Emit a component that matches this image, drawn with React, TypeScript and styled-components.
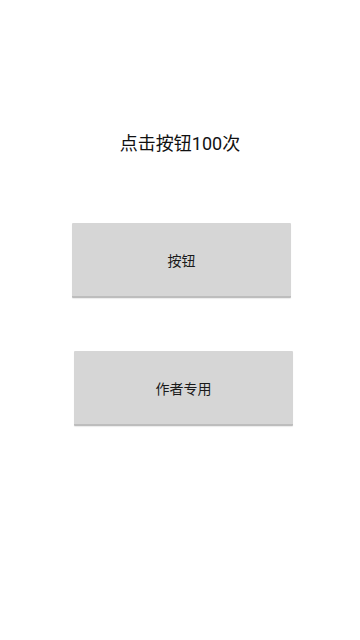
import React from 'react';
import styled, { createGlobalStyle } from 'styled-components';

const GlobalStyle = createGlobalStyle`
  html, body {
    margin: 0;
    padding: 0;
    background: #ffffff;
  }
  body {
    font-family: Roboto, "Noto Sans CJK SC", sans-serif;
  }
`;

const Screen = styled.div`
  width: 360px;
  min-height: 640px;
  display: flex;
  flex-direction: column;
  background: #ffffff;
`;

const Title = styled.h1`
  margin: 132px 0 0;
  font-size: 18px;
  line-height: 24px;
  font-weight: 400;
  color: #111111;
  text-align: center;
`;

const Actions = styled.div`
  display: flex;
  flex-direction: column;
  gap: 53px;
  margin-top: 67px;
`;

const ActionButton = styled.button<{ $left: number }>`
  box-sizing: border-box;
  width: 219px;
  height: 75px;
  margin-left: ${(p) => p.$left}px;
  padding: 0;
  border: none;
  border-bottom: 2px solid #bdbdbd;
  border-radius: 1px;
  background: #d6d6d6;
  box-shadow: 0 1px 1px rgba(0, 0, 0, 0.08);
  font-family: Roboto, "Noto Sans CJK SC", sans-serif;
  font-size: 14px;
  color: #1a1a1a;
  cursor: pointer;
`;

const App = () => {
  return (
    <>
      <GlobalStyle />
      <Screen>
        <Title>点击按钮100次</Title>
        <Actions>
          <ActionButton $left={72}>按钮</ActionButton>
          <ActionButton $left={74}>作者专用</ActionButton>
        </Actions>
      </Screen>
    </>
  );
};

export default App;
